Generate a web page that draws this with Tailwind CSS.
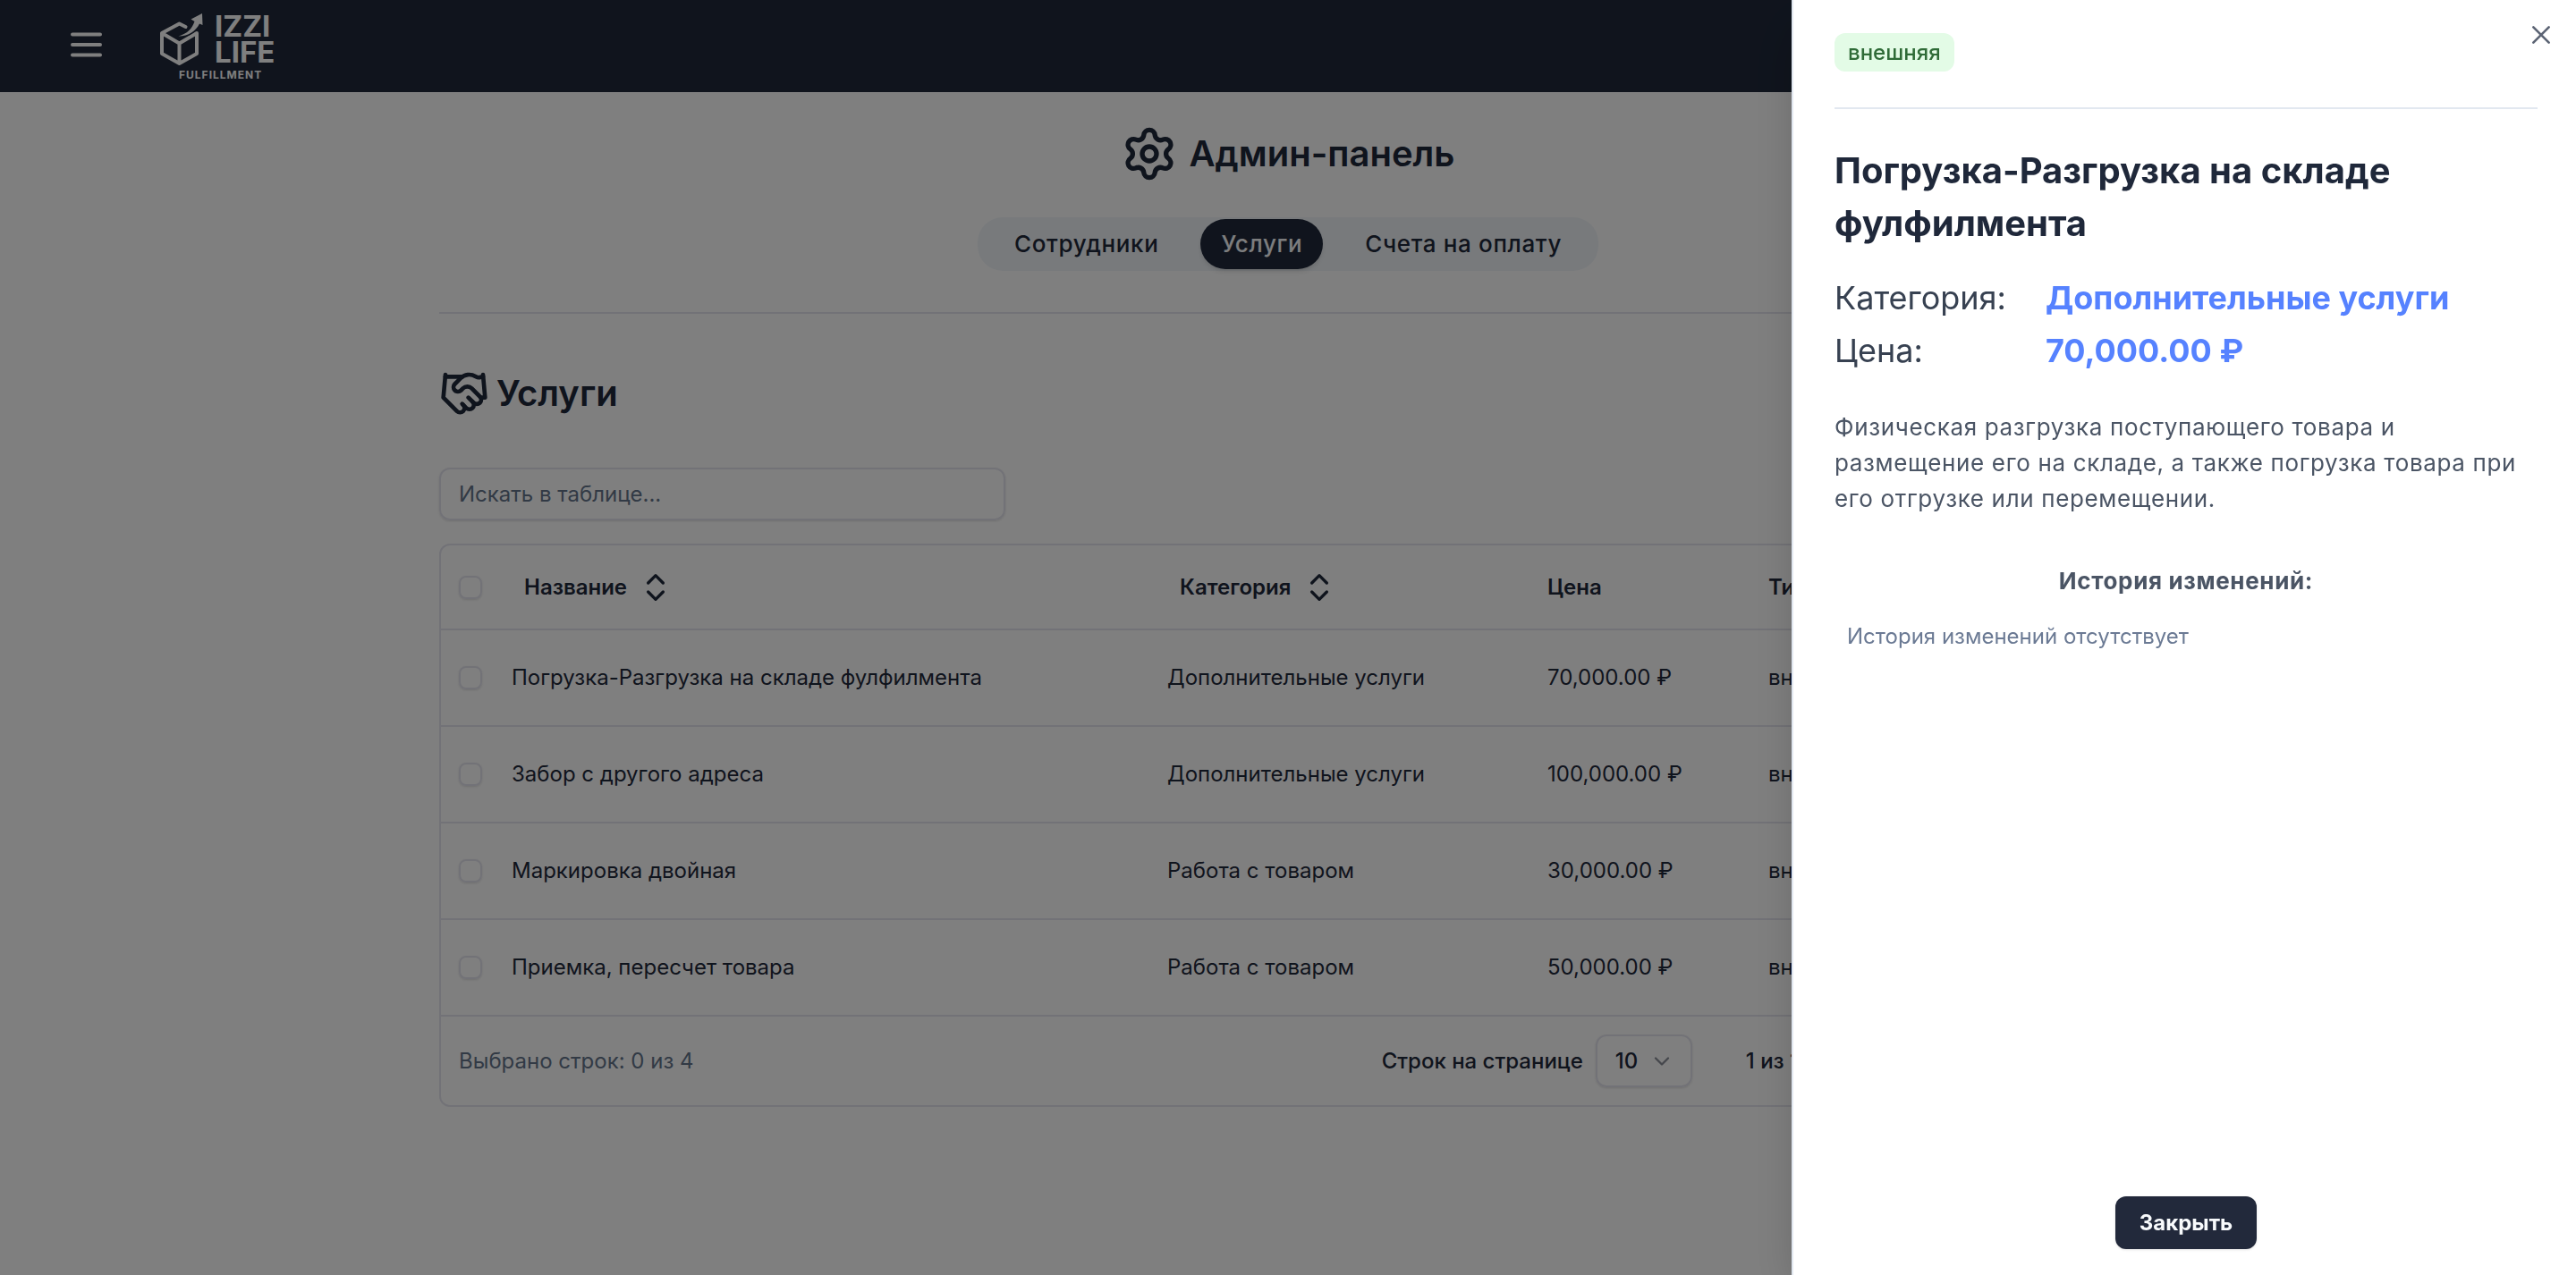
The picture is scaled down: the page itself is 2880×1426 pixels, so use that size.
<!DOCTYPE html>
<html lang="ru">
<head>
<meta charset="utf-8">
<title>Админ-панель</title>
<script src="https://cdn.jsdelivr.net/npm/@tailwindcss/browser@4"></script>
</head>
<body class="min-h-screen overflow-hidden bg-white font-['Inter',sans-serif] text-2xl leading-9 text-[#1f283a]">

<header class="flex h-[103px] items-center gap-16 bg-[#20293b] px-[79px]">
  <button type="button" aria-label="Меню" class="pb-1 text-white">
    <svg class="h-7 w-[35px]" viewBox="0 0 35 28" fill="none" stroke="currentColor" stroke-width="4" stroke-linecap="round"><path d="M2 2.500h31M2 14h31M2 25.500h31"/></svg>
  </button>
  <a href="#" aria-label="Izzi Life Fulfillment" class="text-white">
    <svg class="h-[103px] w-[132px]" viewBox="178 0 132 103" fill="none" stroke="currentColor" stroke-width="4" stroke-linejoin="round" stroke-linecap="round">
      <path d="M207.500 30 200.500 26.500 181 37v23l19.500 11L220 60V37l-19.500 11.500L181 37M200.500 48.500V71"/>
      <path d="M199.500 40.500c10-3 15-8 18-16.500l-4-2.500 12.500-6.500.5 13-3.500-1.500c-4 8-12 14-23.500 14z" fill="currentColor" stroke="#20293b" stroke-width="2.500" paint-order="stroke"/>
      <g fill="currentColor" stroke="none" class="font-bold">
        <text x="240" y="41" font-size="33">IZZI</text>
        <text x="240" y="70" font-size="33">LIFE</text>
        <text x="200" y="87.500" font-size="12" letter-spacing="1">FULFILLMENT</text>
      </g>
    </svg>
  </a>
</header>

<main class="mx-auto max-w-[1898px] pt-[37px]">
  <div class="flex items-center justify-center gap-3">
    <svg class="size-16" viewBox="0 0 24 24" fill="none" stroke="currentColor" stroke-width="2" stroke-linecap="round" stroke-linejoin="round"><path d="M9.671 4.136a2.34 2.34 0 0 1 4.659 0 2.34 2.34 0 0 0 3.319 1.915 2.34 2.34 0 0 1 2.33 4.033 2.34 2.34 0 0 0 0 3.831 2.34 2.34 0 0 1-2.33 4.033 2.34 2.34 0 0 0-3.319 1.915 2.34 2.34 0 0 1-4.659 0 2.34 2.34 0 0 0-3.32-1.915 2.34 2.34 0 0 1-2.33-4.033 2.34 2.34 0 0 0 0-3.831A2.34 2.34 0 0 1 6.35 6.051a2.34 2.34 0 0 0 3.319-1.915"/><circle cx="12" cy="12" r="3"/></svg>
    <h1 class="text-[40px] leading-[60px] font-semibold">Админ-панель</h1>
  </div>

  <div class="mt-[39px] flex justify-center">
    <nav class="flex h-[60px] items-center gap-6 rounded-[28px] bg-[#f1f5f9] px-[18px] text-[26px] font-medium tracking-wide">
      <a href="#" class="flex h-14 items-center rounded-[28px] px-[23px]">Сотрудники</a>
      <a href="#" aria-current="page" class="flex h-14 items-center rounded-[28px] bg-[#20293b] px-[23px] text-[#f8fafc] shadow-md">Услуги</a>
      <a href="#" class="flex h-14 items-center rounded-[28px] px-[23px]">Счета на оплату</a>
    </nav>
  </div>

  <hr class="mt-[46px] border-t-2 border-[#e5e5ee]">

  <div class="mt-[61px] flex items-center gap-2">
    <svg class="size-14" viewBox="0 0 24 24" fill="none" stroke="currentColor" stroke-width="2" stroke-linecap="round" stroke-linejoin="round"><path d="m11 17 2 2a1 1 0 1 0 3-3"/><path d="m14 14 2.500 2.500a1 1 0 1 0 3-3l-3.880-3.880a3 3 0 0 0-4.240 0l-.88.88a1 1 0 1 1-3-3l2.810-2.810a5.790 5.790 0 0 1 7.060-.87l.47.28a2 2 0 0 0 1.420.25L21 4"/><path d="m21 3 1 11h-2"/><path d="M3 3 2 14l6.500 6.500a1 1 0 1 0 3-3"/><path d="M3 4h8"/></svg>
    <h2 class="text-[40px] leading-[56px] font-semibold">Услуги</h2>
  </div>

  <input type="search" aria-label="Искать в таблице" placeholder="Искать в таблице..." class="mt-[55px] block h-[59px] w-[633px] rounded-xl border-2 border-[#e5e5ee] px-5 shadow placeholder:text-[#64748b]">

  <section class="mt-[26px] rounded-xl border-2 border-[#e5e5ee]">
    <table class="w-full table-fixed text-left">
      <colgroup><col class="w-[65px]"><col class="w-[733px]"><col class="w-[425px]"><col class="w-[247px]"><col></colgroup>
      <thead>
        <tr class="h-[94px] border-b-2 border-[#e5e5ee] font-semibold">
          <th class="pl-5"><input type="checkbox" aria-label="Выбрать все" class="block size-[26px] appearance-none rounded-lg border-2 border-[#e5e5ee] shadow"></th>
          <th class="pl-3.5 font-semibold"><button type="button" class="flex items-center gap-3 px-3.5">Название
            <svg class="size-10" viewBox="0 0 24 24" fill="none" stroke="currentColor" stroke-width="2" stroke-linecap="round" stroke-linejoin="round"><path d="m7 15 5 5 5-5M7 9l5-5 5 5"/></svg></button></th>
          <th class="pl-3.5 font-semibold"><button type="button" class="flex items-center gap-3 px-3.5">Категория
            <svg class="size-10" viewBox="0 0 24 24" fill="none" stroke="currentColor" stroke-width="2" stroke-linecap="round" stroke-linejoin="round"><path d="m7 15 5 5 5-5M7 9l5-5 5 5"/></svg></button></th>
          <th class="pl-3.5 font-semibold">Цена</th>
          <th class="pl-3.5 font-semibold">Тип</th>
        </tr>
      </thead>
      <tbody>
        <tr class="h-[108px] border-b-2 border-[#e5e5ee]">
          <td class="pl-5"><input type="checkbox" aria-label="Выбрать строку 1" class="block size-[26px] appearance-none rounded-lg border-2 border-[#e5e5ee] shadow"></td>
          <td class="pl-3.5">Погрузка-Разгрузка на складе фулфилмента</td><td class="pl-3.5">Дополнительные услуги</td><td class="pl-3.5">70,000.00 ₽</td><td class="pl-3.5">внешняя</td>
        </tr>
        <tr class="h-[108px] border-b-2 border-[#e5e5ee]">
          <td class="pl-5"><input type="checkbox" aria-label="Выбрать строку 2" class="block size-[26px] appearance-none rounded-lg border-2 border-[#e5e5ee] shadow"></td>
          <td class="pl-3.5">Забор с другого адреса</td><td class="pl-3.5">Дополнительные услуги</td><td class="pl-3.5">100,000.00 ₽</td><td class="pl-3.5">внешняя</td>
        </tr>
        <tr class="h-[108px] border-b-2 border-[#e5e5ee]">
          <td class="pl-5"><input type="checkbox" aria-label="Выбрать строку 3" class="block size-[26px] appearance-none rounded-lg border-2 border-[#e5e5ee] shadow"></td>
          <td class="pl-3.5">Маркировка двойная</td><td class="pl-3.5">Работа с товаром</td><td class="pl-3.5">30,000.00 ₽</td><td class="pl-3.5">внешняя</td>
        </tr>
        <tr class="h-[108px] border-b-2 border-[#e5e5ee]">
          <td class="pl-5"><input type="checkbox" aria-label="Выбрать строку 4" class="block size-[26px] appearance-none rounded-lg border-2 border-[#e5e5ee] shadow"></td>
          <td class="pl-3.5">Приемка, пересчет товара</td><td class="pl-3.5">Работа с товаром</td><td class="pl-3.5">50,000.00 ₽</td><td class="pl-3.5">внешняя</td>
        </tr>
      </tbody>
    </table>
    <div class="flex h-[99px] items-center pr-5 pl-5">
      <p class="text-[#64748b]">Выбрано строк: 0 из 4</p>
      <div class="ml-auto flex items-center font-medium">
        <label for="page-size">Строк на странице</label>
        <div class="relative ml-3.5">
          <select id="page-size" class="block h-[59px] w-[108px] appearance-none rounded-xl border-2 border-[#e5e5ee] pl-5 shadow"><option>10</option><option>20</option></select>
          <svg class="pointer-events-none absolute top-4 right-5 size-7" viewBox="0 0 24 24" fill="none" stroke="#8b8f99" stroke-width="2" stroke-linecap="round" stroke-linejoin="round"><path d="m6 9 6 6 6-6"/></svg>
        </div>
        <span class="mr-[68px] ml-[60px]">1 из 1</span>
        <div class="flex gap-4">
          <button type="button" aria-label="Первая страница" class="size-[60px] rounded-xl border-2 border-[#e5e5ee]">«</button>
          <button type="button" aria-label="Предыдущая страница" class="size-[60px] rounded-xl border-2 border-[#e5e5ee]">‹</button>
          <button type="button" aria-label="Следующая страница" class="size-[60px] rounded-xl border-2 border-[#e5e5ee]">›</button>
          <button type="button" aria-label="Последняя страница" class="size-[60px] rounded-xl border-2 border-[#e5e5ee]">»</button>
        </div>
      </div>
    </div>
  </section>
</main>

<div class="fixed inset-0 bg-black/50"></div>

<aside role="dialog" aria-modal="true" aria-labelledby="service-title" class="fixed inset-y-0 right-0 flex w-[877px] flex-col border-l-2 border-[#e2e8f0] bg-white pt-[37px] pr-[43px] pb-[29px] pl-[46px] shadow-2xl">
  <button type="button" aria-label="Закрыть панель" class="absolute top-[23px] right-[23px] text-[#5c6474]">
    <svg class="size-8" viewBox="0 0 24 24" fill="none" stroke="currentColor" stroke-width="2" stroke-linecap="round"><path d="M5.500 5.500l13 13M18.500 5.500l-13 13"/></svg>
  </button>
  <div class="border-b-2 border-[#e2e8f0] pb-10">
    <span class="flex h-[43px] w-fit items-center rounded-xl bg-[#e3fbe6] px-[15px] font-medium text-[#2f6b37]">внешняя</span>
  </div>
  <h2 id="service-title" class="mt-[39px] text-[40px] leading-[59px] font-bold text-[#1f283a]">Погрузка-Разгрузка на складе фулфилмента</h2>
  <dl class="mt-[25px] grid grid-cols-[236px_1fr] text-4xl leading-[59px]">
    <dt class="text-[#374151]">Категория:</dt><dd class="font-bold text-[#5682ff]">Дополнительные услуги</dd>
    <dt class="text-[#374151]">Цена:</dt><dd class="font-bold text-[#5682ff]">70,000.00 ₽</dd>
  </dl>
  <p class="mt-9 text-[26px] leading-10 tracking-wide text-[#4b5565]">Физическая разгрузка поступающего товара и размещение его на складе, а также погрузка товара при его отгрузке или перемещении.</p>
  <h3 class="mt-[52px] text-center text-[26px] leading-10 font-bold tracking-wide text-[#4b5565]">История изменений:</h3>
  <p class="mt-6 px-3.5 text-[#6b7a94]">История изменений отсутствует</p>
  <button type="button" class="mx-auto mt-auto h-[59px] rounded-xl bg-[#22293b] px-[27px] font-bold text-[#f8fafc] shadow">Закрыть</button>
</aside>
</body>
</html>
